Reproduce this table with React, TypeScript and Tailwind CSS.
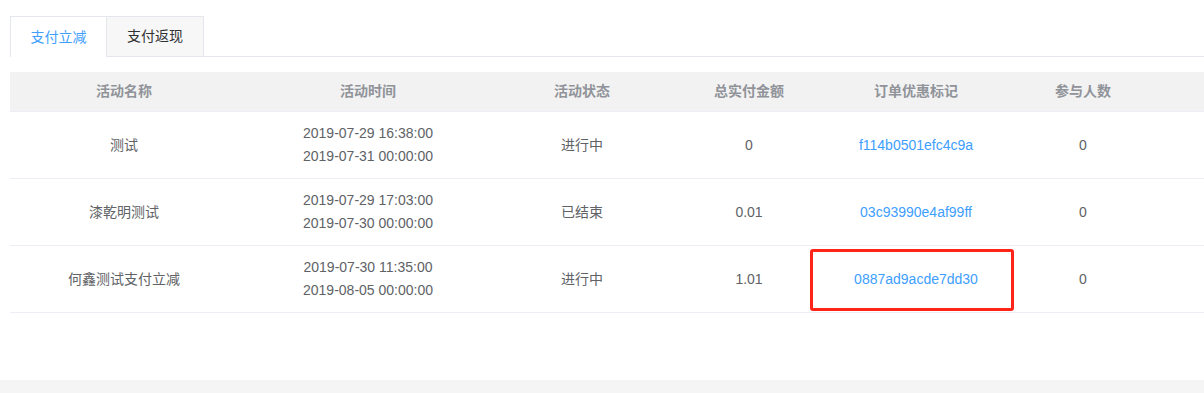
const columns = [
  { title: "活动名称", width: "w-[228px]" },
  { title: "活动时间", width: "w-[260px]" },
  { title: "活动状态", width: "w-[168px]" },
  { title: "总实付金额", width: "w-[166px]" },
  { title: "订单优惠标记", width: "w-[168px]" },
  { title: "参与人数", width: "w-[166px]" },
];

const rows = [
  {
    name: "测试",
    start: "2019-07-29 16:38:00",
    end: "2019-07-31 00:00:00",
    status: "进行中",
    amount: "0",
    code: "f114b0501efc4c9a",
    count: "0",
  },
  {
    name: "漆乾明测试",
    start: "2019-07-29 17:03:00",
    end: "2019-07-30 00:00:00",
    status: "已结束",
    amount: "0.01",
    code: "03c93990e4af99ff",
    count: "0",
  },
  {
    name: "何鑫测试支付立减",
    start: "2019-07-30 11:35:00",
    end: "2019-08-05 00:00:00",
    status: "进行中",
    amount: "1.01",
    code: "0887ad9acde7dd30",
    count: "0",
    marked: true,
  },
];

const App = () => {
  return (
    <div className="w-[1204px] h-[393px] bg-white flex flex-col font-['Liberation_Sans','Noto_Sans_CJK_SC',sans-serif] text-[14px] overflow-hidden">
      <div className="pl-[10px] pt-[16px]">
        {/* tabs */}
        <div className="flex h-[41px]">
          <div className="w-[97px] flex items-center justify-center border-l border-t border-r border-[#e4e7ed] bg-white text-[#409eff]">
            支付立减
          </div>
          <div className="w-[97px] flex items-center justify-center border-t border-r border-b border-[#e4e7ed] bg-[#f7f7f7] text-[#303133]">
            支付返现
          </div>
          <div className="flex-1 border-b border-[#e4e7ed]" />
        </div>

        {/* table */}
        <div className="mt-[15px]">
          <div className="flex h-[40px] bg-[#f2f2f2] border-b border-[#ebeef5] text-[#909399] font-bold">
            {columns.map((col) => (
              <div key={col.title} className={`${col.width} flex items-center justify-center`}>
                {col.title}
              </div>
            ))}
            <div className="flex-1" />
          </div>

          {rows.map((row) => (
            <div key={row.code} className="relative flex h-[67px] border-b border-[#ebeef5] text-[#606266]">
              <div className="w-[228px] flex items-center justify-center">{row.name}</div>
              <div className="w-[260px] flex flex-col items-center justify-center leading-[23px]">
                <span>{row.start}</span>
                <span>{row.end}</span>
              </div>
              <div className="w-[168px] flex items-center justify-center">{row.status}</div>
              <div className="w-[166px] flex items-center justify-center">{row.amount}</div>
              <div className="w-[168px] flex items-center justify-center text-[#409eff]">{row.code}</div>
              <div className="w-[166px] flex items-center justify-center">{row.count}</div>
              <div className="flex-1" />
              {row.marked && (
                <div className="absolute left-[800px] top-[3px] w-[204px] h-[62px] border-[3px] border-[#ff2418] rounded-[3px]" />
              )}
            </div>
          ))}
        </div>
      </div>

      <div className="flex-1" />
      <div className="h-[13px] bg-[#f5f5f5]" />
    </div>
  );
};

export default App;
